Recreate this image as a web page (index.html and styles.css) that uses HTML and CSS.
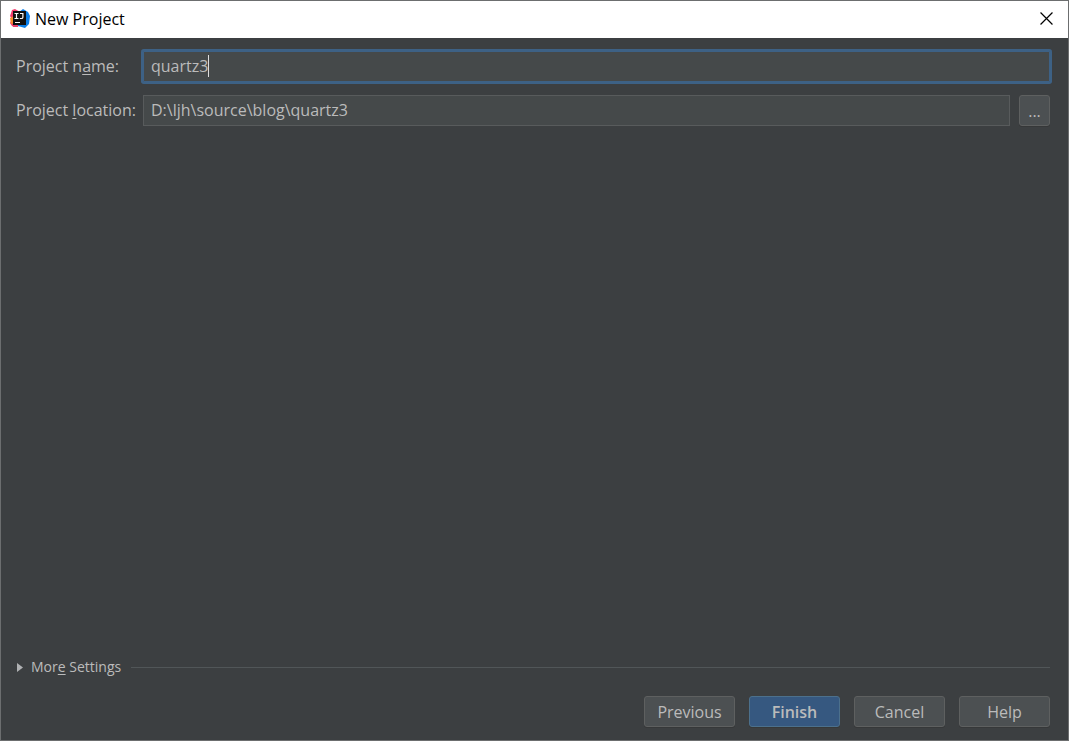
FILE: index.html
```html
<!DOCTYPE html>
<html lang="en">

<head>
    <meta charset="UTF-8">
    <meta name="viewport" content="width=device-width, initial-scale=1.0">
    <title>New Project</title>
    <link rel="stylesheet" href="styles.css">
</head>

<body>

    <div class="dialog">

        <header class="titlebar">
            <svg class="logo" viewBox="0 0 20 20" aria-hidden="true">
                <path d="M2 1 L5 0 L10 3 L8 17 L2 17 L0 14 L2 10 L0 7 Z" fill="#f4386b" />
                <path d="M0 9 L4 7 L5 14 L1 15 Z" fill="#f98b2c" />
                <path d="M2 16 L9 15 L8 18 L3 18 Z" fill="#e8416f" />
                <path d="M9 3 L13 0 L18 3 L20 7 L19 15 L15 19 L8 17 Z" fill="#0b7fea" />
                <rect x="3" y="2" width="13" height="14" fill="#101010" />
                <path d="M4.5 4.5 H8.5 M6.5 4.5 V9.5 M4.5 9.5 H8.5 M10 4.5 H13.5 M12.9 4.5 V8.2 Q12.9 9.5 11.5 9.5 H9.8" fill="none" stroke="#fff" stroke-width="1.2" />
                <rect x="5" y="13" width="5" height="1" fill="#fff" />
            </svg>
            <h1>New Project</h1>
            <button class="close" type="button" aria-label="Close">
                <svg viewBox="0 0 12 12"><path d="M0.5 0.5 L11.5 11.5 M11.5 0.5 L0.5 11.5" stroke="#000" stroke-width="1.1" /></svg>
            </button>
        </header>

        <form class="content">

            <div class="fields">
                <label for="projectName">Project n<u>a</u>me:</label>
                <div class="name-field">
                    <input class="focused" type="text" id="projectName" value="quartz3">
                    <span class="caret"></span>
                </div>

                <label for="projectLocation">Project <u>l</u>ocation:</label>
                <div class="location-field">
                    <input type="text" id="projectLocation" value="D:\ljh\source\blog\quartz3">
                    <button class="browse" type="button" aria-label="Browse">...</button>
                </div>
            </div>

            <div class="more">
                <button class="more-toggle" type="button" aria-expanded="false">
                    <svg viewBox="0 0 6 9"><path d="M0 0 L6 4.5 L0 9 Z" fill="#afb1b3" /></svg>
                    <span>Mor<u>e</u> Settings</span>
                </button>
                <div class="line"></div>
            </div>

            <div class="buttons">
                <button type="button">Previous</button>
                <button class="primary" type="submit">Finish</button>
                <button type="button">Cancel</button>
                <button type="button">Help</button>
            </div>

        </form>

    </div>

</body>

</html>
```
FILE: styles.css
```css
* {
    box-sizing: border-box;
}

body {
    margin: 0;
    font-family: "Open Sans", "Noto Sans", sans-serif;
    font-size: 16px;
    line-height: 22px;
    color: #bbbbbb;
    background-color: #3c3f41;
}

button,
input {
    font: inherit;
    color: inherit;
}

u {
    text-decoration-thickness: 1px;
    text-underline-offset: 2px;
}

.dialog {
    display: flex;
    flex-direction: column;
    min-height: 100vh;
    border: 1px solid #6c6e6f;
}

.titlebar {
    display: flex;
    align-items: center;
    height: 37px;
    padding: 0 15px 2px 9px;
    background-color: #ffffff;
    color: #000000;
}

.logo {
    width: 20px;
    height: 20px;
}

h1 {
    flex: 1;
    margin: 0;
    padding-left: 5px;
    font-size: 16px;
    font-weight: normal;
}

.close {
    display: flex;
    padding: 0;
    border: none;
    background: none;
}

.close svg {
    width: 13px;
    height: 13px;
}

.content {
    flex: 1;
    display: flex;
    flex-direction: column;
    padding: 13px 18px 13px 15px;
}

.fields {
    display: grid;
    grid-template-columns: 119px 1fr;
    align-items: center;
    gap: 13px 8px;
}

label {
    padding-bottom: 2px;
    white-space: nowrap;
}

.name-field {
    position: relative;
    display: flex;
}

input {
    flex: 1;
    min-width: 0;
    height: 31px;
    padding: 0 7px 2px;
    border: 1px solid #585b5c;
    background-color: #45494a;
}

input:focus {
    outline: none;
}

.focused {
    border-color: #3d6185;
    border-radius: 1px;
    box-shadow: 0 0 0 2px #3d6185;
}

/* text cursor at the end of the project name */
.caret {
    position: absolute;
    top: 4px;
    left: 65px;
    width: 1px;
    height: 22px;
    background-color: #dddddd;
}

.location-field {
    display: flex;
    gap: 9px;
}

.browse,
.buttons button {
    height: 31px;
    padding: 0;
    border: 1px solid #5e6060;
    border-radius: 3px;
    background-color: #4c5052;
    box-shadow: 0 1px 0 #363839;
}

.browse {
    width: 31px;
}

.more {
    display: flex;
    align-items: center;
    gap: 7px;
    margin-top: auto;
}

.more-toggle {
    display: flex;
    align-items: center;
    gap: 8px;
    min-width: 108px;
    padding: 0 0 0 1px;
    border: none;
    background: none;
    font-size: 14px;
}

.more-toggle svg {
    width: 6px;
    height: 9px;
}

.line {
    flex: 1;
    height: 1px;
    background-color: #515658;
}

.buttons {
    display: flex;
    justify-content: flex-end;
    gap: 14px;
    margin-top: 18px;
}

.buttons button {
    width: 91px;
}

.buttons .primary {
    border-color: #4c708c;
    background-color: #365880;
    font-weight: 600;
}
```
